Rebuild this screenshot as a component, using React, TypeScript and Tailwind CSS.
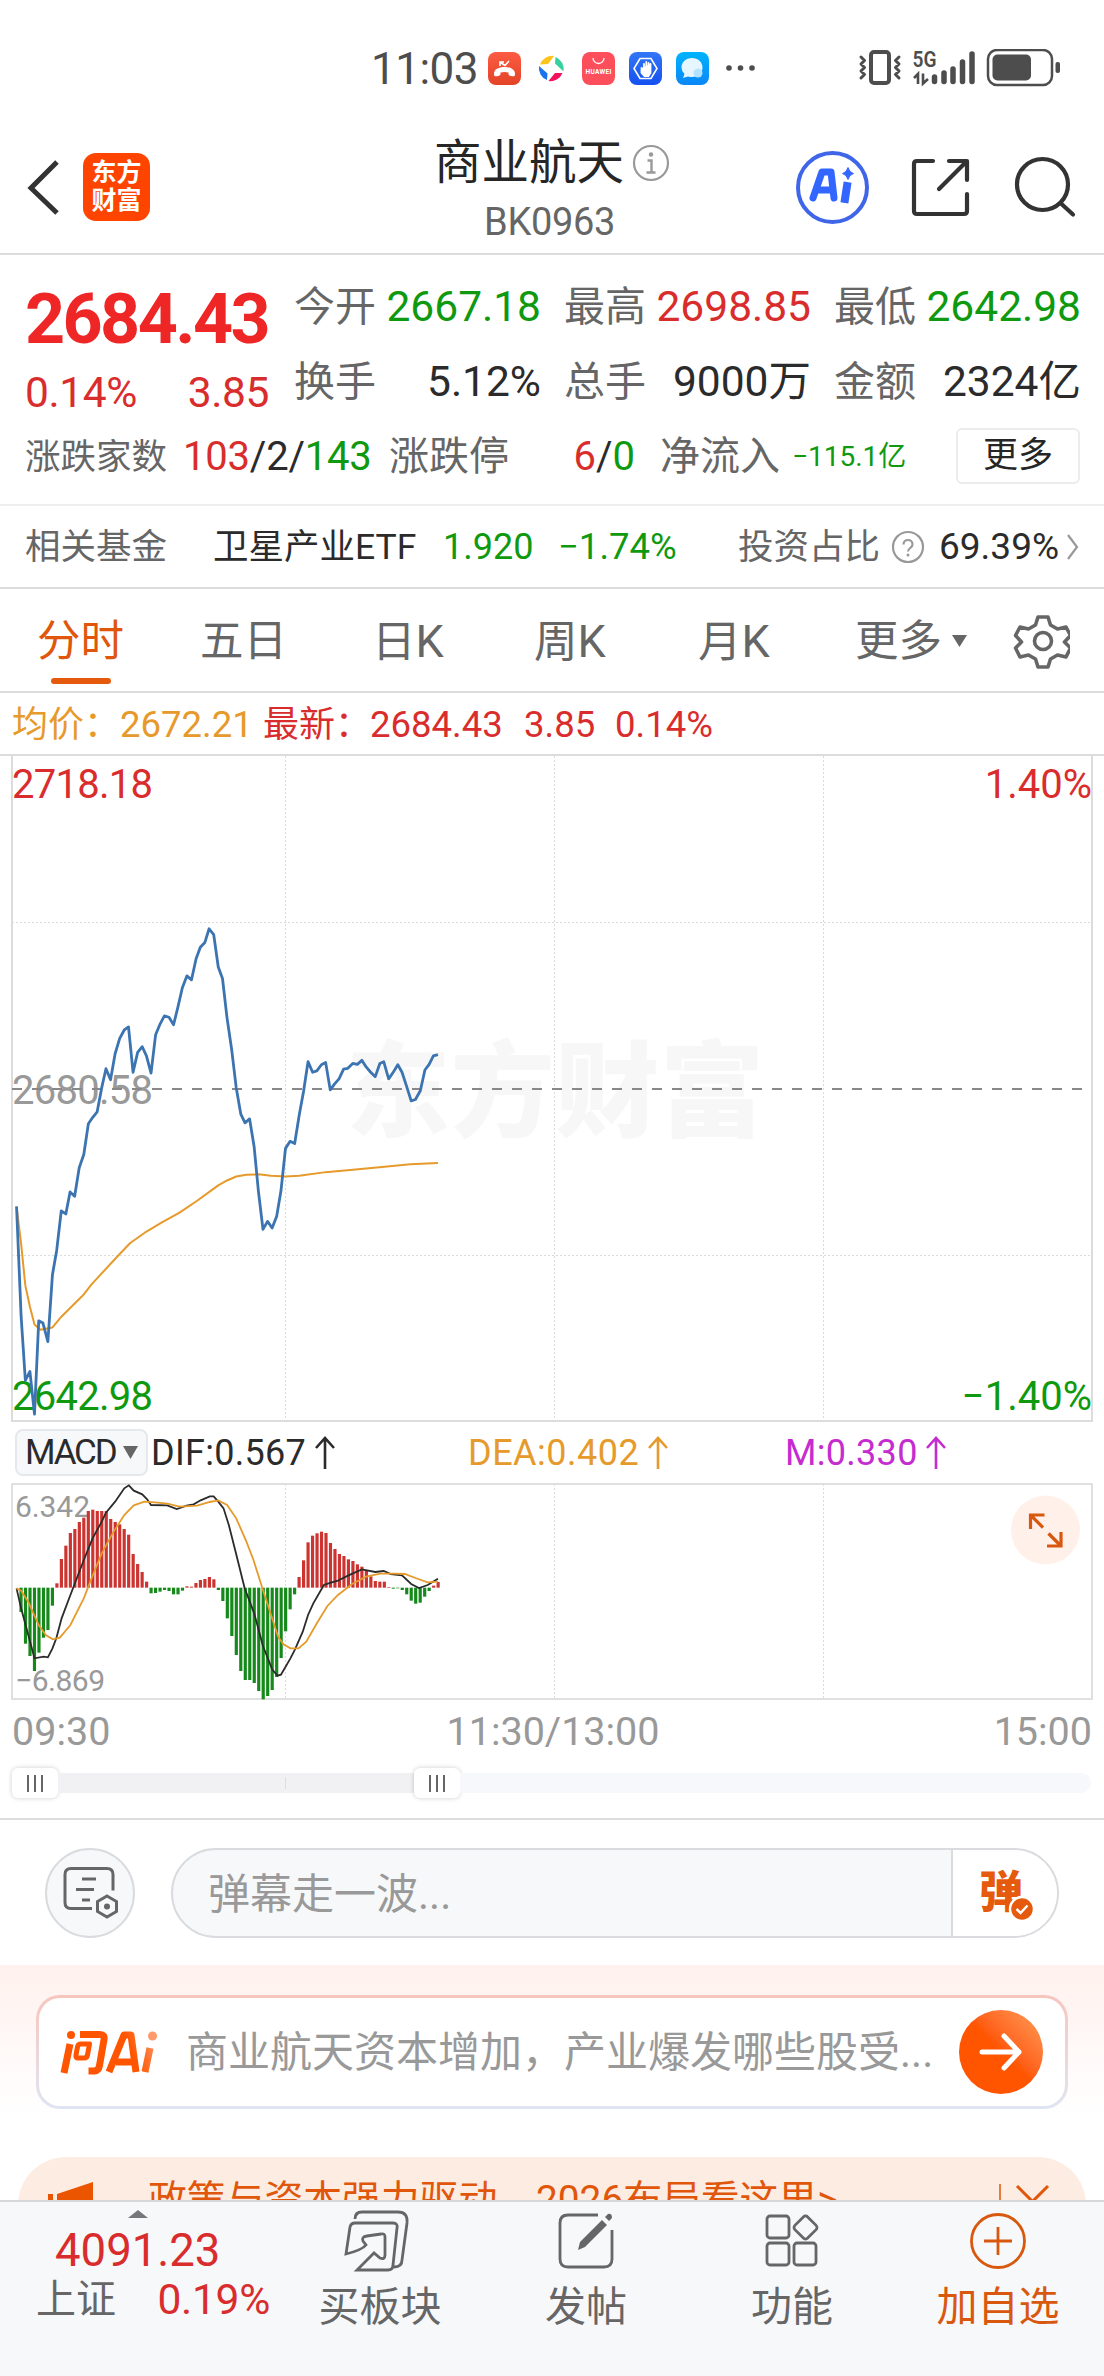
import type { ReactNode } from "react";

interface Quote {
    label: string;
    value: string;
    color: string;
}

const quotes: Quote[] = [
    { label: "今开", value: "2667.18", color: "text-[#0f990f]" },
    { label: "最高", value: "2698.85", color: "text-[#d92d2d]" },
    { label: "最低", value: "2642.98", color: "text-[#0f990f]" },
    { label: "换手", value: "5.12%", color: "text-[#2b2b2b]" },
    { label: "总手", value: "9000万", color: "text-[#2b2b2b]" },
    { label: "金额", value: "2324亿", color: "text-[#2b2b2b]" },
];

// price line, one point per minute
const pricePoints =
    "47,1060 60,1310 72,1455 85,1435 98,1532 110,1320 122,1325 136,1367 149,1215 161,1160 174,1070 187,1077 199,1027 212,1037 225,972 238,942 251,872 263,858 276,845 289,790 301,747 314,772 327,713 340,678 353,659 365,652 378,755 391,710 404,697 416,718 429,757 442,670 455,645 467,627 480,630 493,647 505,608 518,563 531,536 544,545 557,497 569,471 582,460 594,429 607,442 620,516 632,542 645,632 658,703 671,790 684,850 696,870 709,861 722,925 734,1025 747,1112 760,1094 773,1109 786,1082 798,1025 811,928 824,912 837,917 850,852 862,800 875,731 888,755 900,752 913,738 925,733 938,795 950,782 963,770 976,748 988,746 1002,735 1015,737 1028,728 1040,743 1053,755 1066,765 1079,735 1090,731 1104,770 1117,755 1130,738 1142,755 1155,787 1168,820 1180,817 1194,797 1207,750 1219,737 1231,718 1244,715";

const averagePoints =
    "47,1060 60,1145 72,1240 85,1288 98,1328 115,1340 149,1335 175,1310 238,1260 260,1237 340,1168 370,1143 416,1117 460,1096 510,1074 560,1047 620,1012 645,1001 671,992 700,988 734,987 770,990 811,992 850,990 925,982 1010,976 1100,969 1165,964 1244,961";

const difPoints =
    "47,535 60,595 98,745 124,740 136,742 149,715 160,685 175,625 200,555 212,522 238,450 263,385 289,335 301,308 327,275 353,235 366,226 380,242 404,253 418,268 429,285 475,286 502,297 530,287 550,283 570,271 596,259 607,259 620,275 635,295 650,345 671,433 695,535 722,610 747,708 773,778 788,797 798,794 825,745 838,718 860,665 875,615 890,580 920,525 940,518 960,512 990,496 1028,478 1066,486 1090,483 1110,492 1142,496 1168,522 1190,534 1215,525 1244,506";

const deaPoints =
    "47,535 60,542 80,575 110,645 130,675 150,688 170,683 200,645 238,565 260,505 289,430 320,370 353,315 380,286 410,275 440,277 475,281 510,290 560,287 596,276 620,271 645,285 671,325 700,395 720,450 747,540 773,625 790,680 805,703 825,715 848,715 870,695 900,640 930,588 960,555 1000,522 1040,500 1080,491 1120,491 1150,492 1180,504 1215,517 1244,515";

// MACD histogram, positive = red, negative = green
const macdBars = [
    0, -73, -168, -205, -250, -195, -150, -127, -54, 13, 86, 126, 164, 176, 197, 210, 230, 234, 230, 230, 230, 206, 197,
    190, 176, 159, 101, 71, 47, 18, -17, -16, -12, -7, -10, -20, -20, -9, 4, 3, 14, 23, 26, 32, 25, -7, -40, -92, -145,
    -202, -250, -277, -277, -286, -310, -335, -325, -307, -268, -211, -131, -65, -20, 32, 82, 136, 156, 163, 168, 164,
    134, 116, 101, 95, 85, 80, 70, 63, 52, 34, 20, 18, 18, 2, -3, -2, -7, -20, -39, -48, -45, -27, -10, 6, 17,
];

function StatusBar() {
    return (
        <div className="flex h-[137px] items-start pl-[371px] pt-[49px] text-[#4d4d4d]">
            <span className="w-[116px] text-[44px] leading-[40px] tracking-[-0.5px]">11:03</span>
            <svg width="270" height="40" viewBox="487 49 270 40">
                <defs>
                    <linearGradient id="phone" x1="0" y1="0" x2="0" y2="1">
                        <stop offset="0" stopColor="#fb5c43" />
                        <stop offset="1" stopColor="#e34327" />
                    </linearGradient>
                    <linearGradient id="hand" x1="0" y1="0" x2="0" y2="1">
                        <stop offset="0" stopColor="#3477f6" />
                        <stop offset="1" stopColor="#1450ef" />
                    </linearGradient>
                    <linearGradient id="msg" x1="0" y1="0" x2="0" y2="1">
                        <stop offset="0" stopColor="#00b4fd" />
                        <stop offset="1" stopColor="#0a86f8" />
                    </linearGradient>
                </defs>
                <rect x="488" y="52" width="33" height="33" rx="8" fill="url(#phone)" />
                <path d="M494 74c0-5 5-7 10.500-7s10.500 2 10.500 7c0 2.500-1 2.500-3 2.200l-2-.5c-1.500-.5-1.500-1.200-1.500-3.200-2.500-.8-5.500-.8-8 0 0 2 0 2.700-1.500 3.200l-2 .5c-2 .3-3 .3-3-2.200z" fill="#fff" />
                <path d="M500 66v-4h4M500.500 62.500l4.500 3 4-4.500" fill="none" stroke="#fff" strokeWidth="1.600" />
                <path d="M540 64.500a13 13 0 0 1 14-8.500l-6 8z" fill="#fcc419" />
                <path d="M555.500 57a13 13 0 0 1 8 14.500l-8.500-8z" fill="#35d0a0" />
                <path d="M562.500 73a13 13 0 0 1-14 8l6.500-8z" fill="#f5125d" />
                <path d="M547 80a13 13 0 0 1-8-14l8.500 7.500z" fill="#1a72ee" />
                <rect x="582" y="52" width="33" height="33" rx="8" fill="#fd4f5b" />
                <path d="M593 58a5.500 5.500 0 0 0 11 0" fill="none" stroke="#fff" strokeWidth="1.300" />
                <text x="598.500" y="73.500" textAnchor="middle" fontSize="6.500" fontWeight="700" fill="#fff" textLength="26">HUAWEI</text>
                <rect x="629" y="52" width="33" height="33" rx="8" fill="url(#hand)" />
                <path d="M640 58.500h11l6 10-6 10h-11l-6-10z" fill="none" stroke="#fff" strokeWidth="1.600" />
                <path d="M641.500 68v5l3 3h4l2-3v-9M644 70v-6M646.300 69v-7M648.500 69v-6" fill="#fff" stroke="#fff" strokeWidth="1.800" strokeLinecap="round" />
                <rect x="676" y="52" width="33" height="33" rx="8" fill="url(#msg)" />
                <path d="M692 58c6 0 10.500 4 10.500 9.500S698 77 692 77c-1.500 0-2.500 0-4-.6l-5 1.600 1.500-4a9 9 0 0 1-3-6.500C681.500 62 686 58 692 58z" fill="#e6f6ff" />
                <circle cx="698" cy="73" r="4.500" fill="#b5e2ff" />
                <circle cx="729" cy="68" r="2.800" fill="#4d4d4d" />
                <circle cx="740.500" cy="68" r="2.800" fill="#4d4d4d" />
                <circle cx="752" cy="68" r="2.800" fill="#4d4d4d" />
            </svg>
            <svg className="ml-[98px]" width="210" height="40" viewBox="855 49 210 40">
                <rect x="871" y="52" width="18" height="31" rx="3" fill="none" stroke="#4d4d4d" strokeWidth="4" />
                <path d="M861 57l3.500 3.500-3.500 3.500 3.500 3.500-3.500 3.500 3.500 3.500-3.500 3.500M899 57l-3.500 3.500 3.500 3.500-3.500 3.500 3.500 3.500-3.500 3.500 3.500 3.500" fill="none" stroke="#4d4d4d" strokeWidth="3" strokeLinejoin="round" strokeLinecap="round" />
                <text x="912.500" y="67" fontSize="22" fontWeight="600" fill="#4d4d4d" textLength="24" lengthAdjust="spacingAndGlyphs">5G</text>
                <path d="M914 78l4-4v10M923 73.500v10l5-4.500" fill="none" stroke="#4d4d4d" strokeWidth="2.600" />
                <g stroke="#4d4d4d" strokeWidth="5.500" strokeLinecap="round">
                    <path d="M934.500 77v4.500M944 73v8.500M953 69v12.500M962.500 62v19.500M972 54v27.500" />
                </g>
                <rect x="988" y="50" width="64" height="35" rx="9" fill="none" stroke="#4d4d4d" strokeWidth="2.500" />
                <rect x="992.500" y="54.500" width="38.500" height="26" rx="5" fill="#4d4d4d" />
                <rect x="1055.500" y="62" width="4.500" height="11" rx="2" fill="#4d4d4d" />
            </svg>
        </div>
    );
}

function Header() {
    return (
        <header className="flex h-[118px] items-start border-b-2 border-[#dcdcdc]">
            <svg width="56" height="60" viewBox="0 0 56 60" className="ml-[20px] mt-[20px]">
                <path d="M37 5L11 31l26 25" fill="none" stroke="#333" strokeWidth="5" />
            </svg>
            <div className="ml-[7px] mt-[16px] flex h-[68px] w-[67px] flex-col items-center justify-center rounded-[13px] bg-[#ff4400] text-[25px] font-bold leading-[28px] text-white">
                <span>东方</span>
                <span>财富</span>
            </div>
            <div className="ml-[284px] w-[250px]">
                <div className="flex h-[52px] items-center">
                    <h1 className="text-[47.500px] leading-[50px] text-[#262626]">商业航天</h1>
                    <svg width="40" height="40" viewBox="0 0 40 40" className="ml-[7px]">
                        <circle cx="20" cy="20" r="17" fill="none" stroke="#999" strokeWidth="2.200" />
                        <circle cx="20" cy="11.500" r="2.200" fill="#999" />
                        <path d="M16.500 17.500h4V29M15.500 29.500h9" fill="none" stroke="#999" strokeWidth="2.400" />
                    </svg>
                </div>
                <p className="mt-[11px] pl-[50px] text-[38px] leading-[44px] tracking-[-0.300px] text-[#666]">BK0963</p>
            </div>
            <svg width="310" height="90" viewBox="790 142 310 90" className="ml-[106px] mt-[5px]" fill="none">
                <circle cx="832.500" cy="187.500" r="34.500" stroke="#3f66e8" strokeWidth="4" />
                <path d="M813 198l9-26h9l3 26M819 190h14" stroke="#3366ff" strokeWidth="7" strokeLinejoin="round" strokeLinecap="round" />
                <path d="M847 186l-2 13" stroke="#3366ff" strokeWidth="8" strokeLinejoin="round" strokeLinecap="square" />
                <path d="M848 167.500q1.500 5 5.500 6-4 1-5.500 6-1.500-5-5.500-6 4-1 5.500-6z" fill="#3366ff" stroke="#3366ff" />
                <g stroke="#333" strokeWidth="4.200" strokeLinecap="round" strokeLinejoin="round">
                    <path d="M933 161h-16q-3 0-3 3v47q0 3 3 3h47q3 0 3-3v-17M949 161h18v19M966 162l-27 27" />
                    <circle cx="1042.500" cy="184.500" r="25.500" />
                    <path d="M1061 203.500l12 11" />
                </g>
            </svg>
        </header>
    );
}

function Quotes() {
    return (
        <section className="flex h-[251px] flex-col border-b-2 border-[#eee]">
            <div className="flex h-[165px] pt-[14px]">
                <div className="w-[294px] pl-[25px] text-[#d92d2d]">
                    <p className="mt-[10px] h-[74px] text-[70px] font-bold leading-[80px] tracking-[-2.600px] text-[#ee2726]">2684.43</p>
                    <div className="mt-[15px] flex w-[244px] justify-between text-[42.500px] leading-[50px] tracking-[-0.400px]">
                        <span>0.14%</span>
                        <span>3.85</span>
                    </div>
                </div>
                <div className="grid h-[148px] grid-cols-3 gap-x-[23px] gap-y-0">
                    {quotes.map((q) => (
                        <div key={q.label} className="flex h-[75px] w-[247px] items-center justify-between text-[41px] leading-[60px]">
                            <span className="text-[#666]">{q.label}</span>
                            <span className={`text-[42.500px] ${q.color}`}>{q.value}</span>
                        </div>
                    ))}
                </div>
            </div>
            <div className="flex h-[71px] items-center pl-[25px] pt-[2px] text-[40px] leading-[50px] text-[#666]">
                <span className="w-[158px] text-[35.500px]">涨跌家数</span>
                <span className="w-[206px] text-[40px] tracking-[-0.200px] text-[#2b2b2b]">
                    <span className="text-[#d92d2d]">103</span>/2/<span className="text-[#0f990f]">143</span>
                </span>
                <span className="w-[122px]">涨跌停</span>
                <span className="w-[124px] text-right text-[#2b2b2b]">
                    <span className="text-[#d92d2d]">6</span>/<span className="text-[#0f990f]">0</span>
                </span>
                <span className="ml-[25px] w-[132px]">净流入</span>
                <span className="w-[164px] text-[28px] text-[#0f990f]">−115.1亿</span>
                <button className="mb-[2px] h-[56px] w-[124px] rounded-[6px] border-2 border-[#eaecee] text-[35px] leading-[48px] text-[#262626]">更多</button>
            </div>
        </section>
    );
}

function Funds() {
    return (
        <section className="flex h-[83px] items-center border-b-2 border-[#dcdcdc] pl-[25px] text-[35.500px] leading-[50px] text-[#666]">
            <span className="w-[188px]">相关基金</span>
            <span className="w-[230px] text-[#2b2b2b]">卫星产业ETF</span>
            <span className="w-[115px] text-[36px] text-[#0f990f]">1.920</span>
            <span className="w-[180px] text-[36.500px] text-[#0f990f]">−1.74%</span>
            <span className="w-[152px]">投资占比</span>
            <svg width="36" height="36" viewBox="0 0 36 36">
                <circle cx="18" cy="18" r="15" fill="none" stroke="#999" strokeWidth="2.200" />
                <path d="M13.500 15.500c0-6 9-6 9 0 0 3.500-4.500 3.500-4.500 7" fill="none" stroke="#999" strokeWidth="2.200" />
                <circle cx="18" cy="26" r="1.500" fill="#999" />
            </svg>
            <span className="ml-[13px] w-[127px] text-[37px] text-[#2b2b2b]">69.39%</span>
            <svg width="14" height="28" viewBox="0 0 14 28">
                <path d="M2 2l9 12-9 12" fill="none" stroke="#999" strokeWidth="2.200" />
            </svg>
        </section>
    );
}

function Tabs() {
    return (
        <nav className="flex h-[104px] border-b-2 border-[#dcdcdc] text-[43.500px] leading-[105px] text-[#666]">
            <div className="flex w-[200px] flex-col pl-[37px] text-[#e0560b]">
                <span className="h-[89px]">分时</span>
                <span className="ml-[14px] h-[6px] w-[60px] rounded-full bg-[#e55a0c]" />
            </div>
            <span className="w-[172px]">五日</span>
            <span className="w-[162px]">日<span className="text-[45px]">K</span></span>
            <span className="w-[164px]">周<span className="text-[45px]">K</span></span>
            <span className="w-[157px]">月<span className="text-[45px]">K</span></span>
            <span className="w-[95px]">更多</span>
            <svg width="120" height="60" viewBox="950 610 120 60" className="mt-[21px]">
                <path d="M952 635h15l-7.500 12z" fill="#666" />
                <path d="M1038 617h10l2.500 8 7 4 8.500-2 4.500 8.500-6 6.500 6 6-4.500 9-8.500-2-7 4-2.500 8h-10l-2.500-8-7-4-8.500 2-4.500-9 6-6-6-6.500 4.500-8.500 8.500 2 7-4z" fill="none" stroke="#666" strokeWidth="3.600" strokeLinejoin="round" />
                <circle cx="1043" cy="641" r="8.500" fill="none" stroke="#666" strokeWidth="3.600" />
            </svg>
        </nav>
    );
}

function PriceChart() {
    return (
        <svg width="1104" height="666" viewBox="0 756 1104 666" className="block">
            <text x="346" y="1129" fontSize="104" fontWeight="900" fill="#f7f7f7" textLength="418">东方财富</text>
            <g stroke="#dadada" strokeWidth="1" strokeDasharray="2 2">
                <path d="M285.500 756v665M554.500 756v665M823.500 756v665M12 922.500h1080M12 1255.500h1080" />
            </g>
            <path d="M12 756v665h1080V756" fill="none" stroke="#dcdcdc" strokeWidth="2" />
            <g fontSize="40">
                <text x="12" y="798" fill="#d92d2d" textLength="141">2718.18</text>
                <text x="12" y="1104" fill="#999" textLength="141">2680.58</text>
                <text x="12" y="1410" fill="#0f990f" textLength="141">2642.98</text>
                <text x="1092" y="798" fill="#d92d2d" textAnchor="end">1.40%</text>
                <text x="1092" y="1410" fill="#0f990f" textAnchor="end">−1.40%</text>
            </g>
            <path d="M12 1089h1080" stroke="#888" strokeWidth="1.800" strokeDasharray="10 10" />
            <g transform="translate(0 740) scale(.35204 .44005)" fill="none" strokeLinejoin="round">
                <polyline points={averagePoints} stroke="#e69a2b" strokeWidth="2" vectorEffect="non-scaling-stroke" />
                <polyline points={pricePoints} stroke="#3b74b1" strokeWidth="2.800" vectorEffect="non-scaling-stroke" />
            </g>
        </svg>
    );
}

function UpArrow() {
    return (
        <svg width="20" height="34" viewBox="0 0 20 34" fill="none" stroke="currentColor" strokeWidth="2.600">
            <path d="M10 33V3M1 12l9-10 9 10" />
        </svg>
    );
}

function MacdChart() {
    return (
        <section className="h-[398px] border-b-2 border-[#dcdcdc]">
            <div className="flex h-[61px] items-center pl-[15px] text-[36px] leading-[44px] text-[#2b2b2b]">
                <div className="flex h-[47px] w-[133px] items-center rounded-[8px] border-2 border-[#e6e8eb] bg-[#f7f8fa] pl-[8px]">
                    <span className="w-[98px] text-[35px] tracking-[-2.200px]">MACD</span>
                    <svg width="15" height="13" viewBox="0 0 15 13">
                        <path d="M0 0h15L7.500 13z" fill="#666" />
                    </svg>
                </div>
                <div className="ml-[3px] flex w-[317px] items-center gap-[9px]">
                    <span className="w-[155px] tracking-[0.300px]">DIF:0.567</span>
                    <UpArrow />
                </div>
                <div className="flex w-[317px] items-center gap-[9px] text-[#e69a2b]">
                    <span className="w-[171px] tracking-[0.500px]">DEA:0.402</span>
                    <UpArrow />
                </div>
                <div className="flex items-center gap-[8px] text-[#c52cd0]">
                    <span className="w-[133px] tracking-[0.300px]">M:0.330</span>
                    <UpArrow />
                </div>
            </div>
            <svg width="1104" height="217" viewBox="0 1483 1104 217" className="block">
                <path d="M285.500 1484v215M554.500 1484v215M823.500 1484v215" stroke="#dadada" strokeDasharray="2 2" />
                <rect x="12" y="1484" width="1080" height="215" fill="none" stroke="#e0e0e0" strokeWidth="2" />
                <g fontSize="30" fill="#999">
                    <text x="15" y="1517" textLength="75">6.342</text>
                    <text x="15" y="1691" textLength="90">−6.869</text>
                </g>
                <g transform="translate(0 1410) scale(.35204 .33333)">
                    {macdBars.map((h, i) => (
                        <rect key={i} x={42.500 + i * 12.740} y={h > 0 ? 533 - h : 533} width="9" height={Math.abs(h)} fill={h > 0 ? "#cb3430" : "#15891a"} />
                    ))}
                    <g fill="none" strokeWidth="1.800">
                        <polyline points={difPoints} stroke="#2b2b2b" vectorEffect="non-scaling-stroke" />
                        <polyline points={deaPoints} stroke="#e69a2b" vectorEffect="non-scaling-stroke" />
                    </g>
                </g>
                <circle cx="1045.500" cy="1530" r="34.500" fill="#fff1ea" />
                <path d="M1030.500 1529v-14h14M1031 1515.500l12 12M1061 1532v14h-14M1060.500 1545.500l-12-12" fill="none" stroke="#d9580f" strokeWidth="3.200" />
            </svg>
            <div className="flex h-[64px] items-center justify-between px-[12px] text-[39.500px] leading-[60px] text-[#999]">
                <span className="w-[120px]">09:30</span>
                <span className="pl-[2px]">11:30/13:00</span>
                <span className="w-[120px] text-right">15:00</span>
            </div>
            <div className="flex h-[38px] items-center pl-[12px]">
                <SliderThumb />
                <div className="flex h-[20px] w-[356px] items-center bg-[#f1f1f4] pl-[227px]">
                    <span className="h-[12px] w-px bg-[#ddd]" />
                </div>
                <SliderThumb />
                <div className="h-[20px] w-[631px] rounded-r-full bg-[#f7f8fb]" />
            </div>
        </section>
    );
}

function SliderThumb() {
    return (
        <div className="flex h-[30px] w-[46px] shrink-0 items-center justify-center gap-[5px] rounded-[6px] bg-white shadow-[0_0_5px_rgba(0,0,0,0.2)]">
            <span className="h-[17px] w-[2px] bg-[#666]" />
            <span className="h-[17px] w-[2px] bg-[#666]" />
            <span className="h-[17px] w-[2px] bg-[#666]" />
        </div>
    );
}

function Barrage() {
    return (
        <section className="flex h-[145px] items-center pl-[45px]">
            <div className="flex h-[90px] w-[90px] items-center justify-center rounded-full border-2 border-[#d9dbde] bg-[#f7f8fa]">
                <svg width="58" height="54" viewBox="62 1868 58 54" fill="none" stroke="#666" strokeWidth="3">
                    <path d="M93 1910.500H72q-6 0-6-6v-28q0-6 6-6h36q6 0 6 6v16" />
                    <path d="M83 1881h14M77 1891.500h18M83 1902h8" strokeWidth="3.200" />
                    <path d="M108 1898l9.500 5.500v10l-9.500 5.500-9.500-5.500v-10z" />
                    <circle cx="108" cy="1908.500" r="3" fill="#666" stroke="none" />
                </svg>
            </div>
            <div className="ml-[36px] flex h-[90px] w-[888px] overflow-hidden rounded-full border-2 border-[#d9dbde] bg-[#f7f8fa]">
                <span className="w-[780px] border-r-2 border-[#d9dbde] pl-[35px] text-[42px] leading-[89px] text-[#999]">弹幕走一波...</span>
                <div className="flex flex-1 items-center bg-white pl-[26px]">
                    <svg width="60" height="60" viewBox="978 1863 60 60">
                        <text x="978" y="1908" fontSize="44" fontWeight="900" fill="#e55a0c">弹</text>
                        <circle cx="1021" cy="1909" r="12" fill="#e55a0c" stroke="#fff" strokeWidth="2.500" />
                        <path d="M1015.500 1909l4 4 7-7.500" fill="none" stroke="#fff" strokeWidth="2.500" />
                    </svg>
                </div>
            </div>
        </section>
    );
}

function AskAi() {
    return (
        <section className="h-[192px] bg-linear-to-b from-[#fff1ee] to-white to-80% px-[36px] pt-[30px]">
            <div className="h-[114px] rounded-[24px] bg-linear-to-b from-[#f6c6be] to-[#dfe4f4] p-[3px]">
                <div className="flex h-full items-center rounded-[21px] bg-white pl-[18px]">
                    <svg width="104" height="60" viewBox="56 2022 104 60" className="shrink-0">
                        <defs>
                            <linearGradient id="ask" gradientUnits="userSpaceOnUse" x1="62" y1="2070" x2="156" y2="2034">
                                <stop offset="0.700" stopColor="#ff5500" />
                                <stop offset="1" stopColor="#ff9a6a" />
                            </linearGradient>
                        </defs>
                        <g fill="none" stroke="url(#ask)" strokeWidth="7" strokeLinejoin="round">
                            <path d="M69 2044l-6 29M79 2034.500h20q5 0 4 5l-4.500 26q-1 6-6 5.500h-5" />
                            <path d="M88 2044h-8q-3 0-3.500 3l-1.500 8q-.5 3 2 3h6q3 0 3.500-3l2-11z" strokeWidth="5" />
                            <path d="M108 2072l15-37h7l5 37M115 2062h16M149 2048l-5 24" />
                        </g>
                        <circle cx="70" cy="2035" r="4" fill="#ff5500" />
                        <circle cx="151.500" cy="2036" r="4.500" fill="#ff9a6a" />
                    </svg>
                    <span className="w-[798px] shrink-0 pl-[25px] pt-[2px] text-[42px] leading-[60px] whitespace-nowrap text-[#999]">商业航天资本增加，产业爆发哪些股受...</span>
                    <div className="flex h-[84px] w-[84px] shrink-0 items-center justify-center rounded-full bg-linear-to-tr from-[#ff5500] from-50% to-[#ff9c55]">
                        <svg width="46" height="40" viewBox="0 0 46 40" fill="none" stroke="#fff" strokeWidth="5" strokeLinecap="round" strokeLinejoin="round">
                            <path d="M4 20h37M26 4l15 16-15 16" />
                        </svg>
                    </div>
                </div>
            </div>
        </section>
    );
}

function Promo() {
    return (
        <section className="h-[43px] overflow-hidden px-[18px]">
            <div className="flex h-[96px] items-start rounded-[48px] bg-[#fdece2] pl-[30px] text-[#e0560b]">
                <svg width="50" height="50" viewBox="48 2157 50 50" className="shrink-0">
                    <path d="M48 2194h5v13h-5zM57 2194l36-12v25H57z" fill="#ec5500" />
                </svg>
                <span className="ml-[50px] mt-[13px] w-[850px] text-[38.800px] leading-[60px] whitespace-nowrap">政策与资本强力驱动，2026布局看这里&gt;</span>
                <svg width="60" height="50" viewBox="997 2157 60 50" fill="none" stroke="#e0560b">
                    <path d="M999 2184v30" strokeWidth="1.500" />
                    <path d="M1016 2186l32 32M1047 2186l-32 32" strokeWidth="3" />
                </svg>
            </div>
        </section>
    );
}

interface NavItemProps {
    label: string;
    className?: string;
    children: ReactNode;
}

function NavItem({ label, className = "text-[#666]", children }: NavItemProps) {
    return (
        <div className={`flex w-[206px] flex-col items-center pt-[4px] text-[41px] leading-[62px] ${className}`}>
            <svg width="72" height="70" viewBox="0 0 72 70" fill="none" stroke="currentColor" strokeWidth="2.800">
                {children}
            </svg>
            <span>{label}</span>
        </div>
    );
}

function BottomBar() {
    return (
        <footer className="flex h-[176px] border-t-2 border-[#d8d8da] bg-[#f7f8fa]">
            <div className="w-[277px] pl-[36px] text-[#d92d2d]">
                <svg width="20" height="8" viewBox="0 0 20 8" className="ml-[92px] mt-[8px] block">
                    <path d="M10 0l10 8H0z" fill="#77777b" />
                </svg>
                <p className="pl-[19px] pt-[7px] text-[45.500px] leading-[52px]">4091.23</p>
                <div className="flex w-[234px] items-center justify-between text-[40px] leading-[46px]">
                    <span className="text-[#666]">上证</span>
                    <span className="text-[42.500px] tracking-[-0.300px]">0.19%</span>
                </div>
            </div>
            <NavItem label="买板块">
                <path d="M11 13q0-7 7-7h36q10 0 9 11l-5 37q0 7-8 7" />
                <path d="M2 48L6 21q1-4 5-4h38q5 0 4 5l-4 37q0 5-5 5H13l17-17 6 5q5 2 5-3V31q0-4-4-3l-14 2q-6 1-4 5l3 4Q18 44 2 48z" />
            </NavItem>
            <NavItem label="发帖">
                <path d="M48 9H18q-8 0-8 8v36q0 8 8 8h36q8 0 8-8V24" />
                <path d="M28 44l2-8 22-22 5 5-22 22zM55 11l3-3q4-1 4 4l-3 3z" fill="currentColor" stroke="none" />
            </NavItem>
            <NavItem label="功能">
                <rect x="11" y="10" width="22" height="22" rx="3" />
                <rect x="11" y="37" width="22" height="22" rx="3" />
                <rect x="38" y="37" width="22" height="22" rx="3" />
                <rect x="40.500" y="12.500" width="18" height="18" rx="3" transform="rotate(45 49.500 21.500)" />
            </NavItem>
            <NavItem label="加自选" className="text-[#d9580f]">
                <circle cx="36" cy="35" r="26.500" />
                <path d="M36 21v28M22 35h28" />
            </NavItem>
        </footer>
    );
}

export default function App() {
    return (
        <main className="h-[2376px] w-[1104px] overflow-hidden bg-white font-['Roboto','Noto_Sans_CJK_SC',sans-serif]">
            <StatusBar />
            <Header />
            <Quotes />
            <Funds />
            <Tabs />
            <div className="flex h-[63px] items-center border-b-2 border-[#dcdcdc] pl-[12px] pt-[2px] text-[36.500px] leading-[50px] whitespace-nowrap text-[#d92d2d]">
                <span className="w-[108px] text-[36px] text-[#e69a2b]">均价：</span>
                <span className="w-[143px] text-[#e69a2b]">2672.21</span>
                <span className="w-[107px] text-[36px]">最新：</span>
                <span className="w-[154px]">2684.43</span>
                <span className="w-[91px]">3.85</span>
                <span>0.14%</span>
            </div>
            <PriceChart />
            <MacdChart />
            <Barrage />
            <AskAi />
            <Promo />
            <BottomBar />
        </main>
    );
}
